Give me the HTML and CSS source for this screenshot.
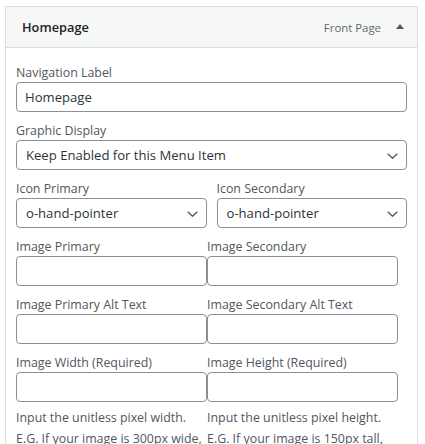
FILE: index.html
```html
<!DOCTYPE html>
<html lang="en">
<head>
<meta charset="utf-8">
<title>Menu Item</title>
<link rel="stylesheet" href="styles.css">
</head>
<body>
<div class="panel">
  <div class="head">
    <span class="title">Homepage</span>
    <span class="type">Front Page</span>
    <svg class="toggle" width="8" height="5" viewBox="0 0 8 5"><polygon points="0,5 4,0 8,5" fill="#50575e"/></svg>
  </div>
  <div class="body">
    <div class="field">
      <label class="lbl">Navigation Label</label>
      <input class="inp" type="text" value="Homepage">
    </div>
    <div class="field">
      <label class="lbl">Graphic Display</label>
      <div class="sel"><span>Keep Enabled for this Menu Item</span><svg class="chev" width="11" height="6" viewBox="0 0 11 6"><polyline points="0.7,0.7 5.5,5.2 10.3,0.7" fill="none" stroke="#50575e" stroke-width="1.4"/></svg></div>
    </div>
    <div class="field pair icons">
      <div class="col">
        <label class="lbl">Icon Primary</label>
        <div class="sel"><span>o-hand-pointer</span><svg class="chev" width="11" height="6" viewBox="0 0 11 6"><polyline points="0.7,0.7 5.5,5.2 10.3,0.7" fill="none" stroke="#50575e" stroke-width="1.4"/></svg></div>
      </div>
      <div class="col">
        <label class="lbl">Icon Secondary</label>
        <div class="sel"><span>o-hand-pointer</span><svg class="chev" width="11" height="6" viewBox="0 0 11 6"><polyline points="0.7,0.7 5.5,5.2 10.3,0.7" fill="none" stroke="#50575e" stroke-width="1.4"/></svg></div>
      </div>
    </div>
    <div class="field pair halves">
      <div class="col">
        <label class="lbl">Image Primary</label>
        <input class="inp" type="text">
      </div>
      <div class="col">
        <label class="lbl">Image Secondary</label>
        <input class="inp" type="text">
      </div>
    </div>
    <div class="field pair halves">
      <div class="col">
        <label class="lbl">Image Primary Alt Text</label>
        <input class="inp" type="text">
      </div>
      <div class="col">
        <label class="lbl">Image Secondary Alt Text</label>
        <input class="inp" type="text">
      </div>
    </div>
    <div class="field pair halves">
      <div class="col">
        <label class="lbl">Image Width (Required)</label>
        <input class="inp" type="text">
        <p class="desc">Input the unitless pixel width.<br>E.G. If your image is 300px wide,</p>
      </div>
      <div class="col">
        <label class="lbl">Image Height (Required)</label>
        <input class="inp" type="text">
        <p class="desc">Input the unitless pixel height.<br>E.G. If your image is 150px tall,</p>
      </div>
    </div>
  </div>
</div>
</body>
</html>
```
FILE: styles.css
```css
html, body {
  margin: 0;
  padding: 0;
  background: #ffffff;
}
body {
  font-family: "Open Sans", "Noto Sans", sans-serif;
  color: #50575e;
  overflow: hidden;
}
.panel {
  margin: 6px 7px 0 5px;
  border: 1px solid #dcdcde;
  min-height: 480px;
  box-sizing: border-box;
}
.head {
  height: 40px;
  background: #f6f7f7;
  border-bottom: 1px solid #dcdcde;
  display: flex;
  align-items: center;
  padding: 0 13px 0 16px;
}
.title {
  font-size: 12.8px;
  font-weight: 600;
  color: #1d2327;
  flex: 1;
}
.type {
  font-size: 11.4px;
  color: #646970;
  margin-right: 15px;
}
.toggle {
  display: block;
  margin-top: -1px;
}
.body {
  padding: 16px 10px 10px 10px;
}
.field {
  margin-bottom: 10px;
}
.lbl {
  display: block;
  font-size: 12.4px;
  line-height: 18px;
  color: #50575e;
  white-space: nowrap;
}
.inp {
  display: block;
  box-sizing: border-box;
  width: 100%;
  height: 30px;
  margin: 0;
  padding: 0 8px;
  border: 1px solid #8c8f94;
  border-radius: 4px;
  background: #fff;
  font-family: "Open Sans", "Noto Sans", sans-serif;
  font-size: 13.1px;
  color: #2c3338;
  outline: none;
}
.sel {
  box-sizing: border-box;
  height: 30px;
  border: 1px solid #8c8f94;
  border-radius: 4px;
  background: #fff;
  display: flex;
  align-items: center;
  justify-content: space-between;
  padding: 0 8px 0 9px;
  font-size: 13.1px;
  color: #2c3338;
  white-space: nowrap;
}
.chev {
  display: block;
  margin-top: 1px;
}
.pair {
  display: grid;
}
.icons {
  grid-template-columns: 1fr 1fr;
  column-gap: 10px;
  margin-top: 1px;
}
.halves {
  grid-template-columns: 191px 191px;
}
.desc {
  margin: 5px 0 0 0;
  font-size: 12.4px;
  line-height: 21px;
  color: #50575e;
  white-space: nowrap;
}
```
